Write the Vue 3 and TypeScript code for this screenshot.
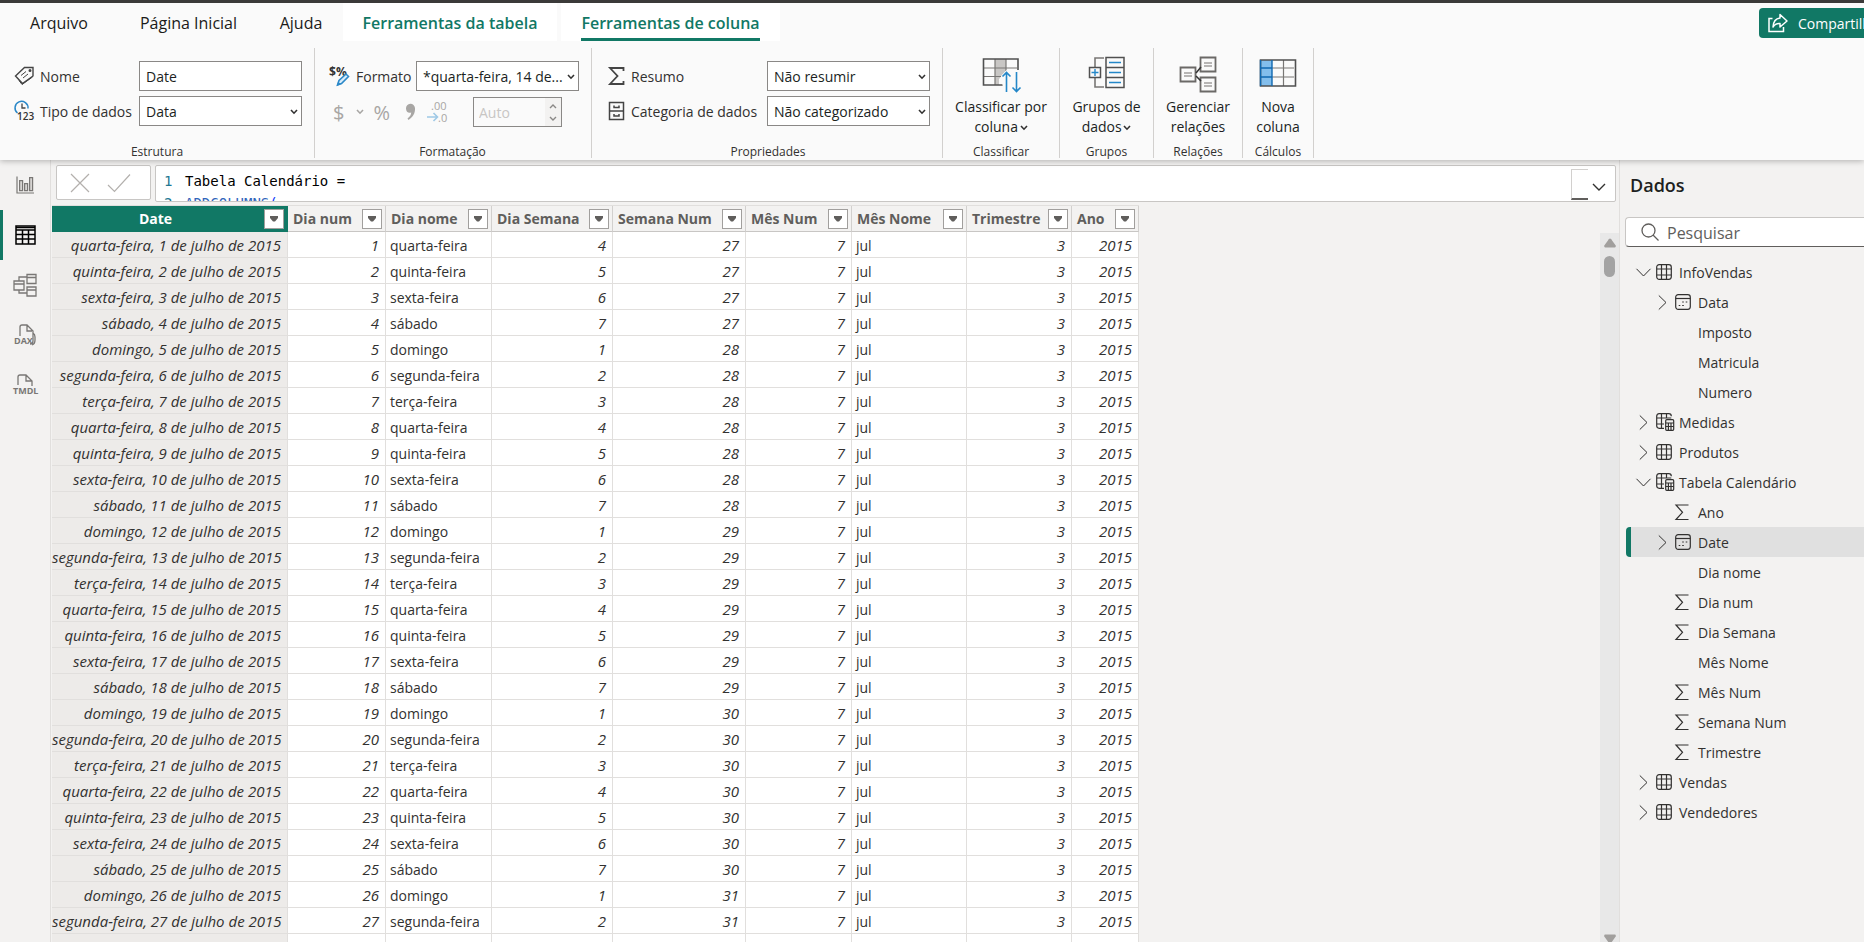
<script setup lang="ts">
import { ref } from 'vue'

type Column = { label: string; width: number; align: 'right' | 'left' }
type Row = (string | number)[]
type TreeIcon = 'table' | 'calc' | 'date' | 'sum' | 'none'
type TreeNode = { label: string; icon: TreeIcon; level: 1 | 2; state?: 'open' | 'closed'; selected?: boolean }

const tabs = [
  { label: 'Arquivo', kind: 'file' },
  { label: 'Página Inicial', kind: 'home' },
  { label: 'Ajuda', kind: 'help' },
  { label: 'Ferramentas da tabela', kind: 'context' },
  { label: 'Ferramentas de coluna', kind: 'context active' },
]

const views = ['report', 'data', 'model', 'dax', 'tmdl']
const viewNames = ['Relatório', 'Tabela', 'Modelo', 'Consulta DAX', 'TMDL']

const columns: Column[] = [
  { label: 'Date', width: 236, align: 'right' },
  { label: 'Dia num', width: 98, align: 'right' },
  { label: 'Dia nome', width: 106, align: 'left' },
  { label: 'Dia Semana', width: 121, align: 'right' },
  { label: 'Semana Num', width: 133, align: 'right' },
  { label: 'Mês Num', width: 106, align: 'right' },
  { label: 'Mês Nome', width: 115, align: 'left' },
  { label: 'Trimestre', width: 105, align: 'right' },
  { label: 'Ano', width: 67, align: 'right' },
]

const weekdays = ['domingo', 'segunda-feira', 'terça-feira', 'quarta-feira', 'quinta-feira', 'sexta-feira', 'sábado']

// 1 July 2015 is a Wednesday; weeks start on Sunday.
const rows: Row[] = Array.from({ length: 28 }, (_, i) => {
  const day = i + 1
  const weekday = (i + 3) % 7
  const week = 27 + Math.floor((i + 3) / 7)
  return [`${weekdays[weekday]}, ${day} de julho de 2015`, day, weekdays[weekday], weekday + 1, week, 7, 'jul', 3, 2015]
})

const tree: TreeNode[] = [
  { label: 'InfoVendas', icon: 'table', level: 1, state: 'open' },
  { label: 'Data', icon: 'date', level: 2, state: 'closed' },
  { label: 'Imposto', icon: 'none', level: 2 },
  { label: 'Matricula', icon: 'none', level: 2 },
  { label: 'Numero', icon: 'none', level: 2 },
  { label: 'Medidas', icon: 'calc', level: 1, state: 'closed' },
  { label: 'Produtos', icon: 'table', level: 1, state: 'closed' },
  { label: 'Tabela Calendário', icon: 'calc', level: 1, state: 'open' },
  { label: 'Ano', icon: 'sum', level: 2 },
  { label: 'Date', icon: 'date', level: 2, state: 'closed', selected: true },
  { label: 'Dia nome', icon: 'none', level: 2 },
  { label: 'Dia num', icon: 'sum', level: 2 },
  { label: 'Dia Semana', icon: 'sum', level: 2 },
  { label: 'Mês Nome', icon: 'none', level: 2 },
  { label: 'Mês Num', icon: 'sum', level: 2 },
  { label: 'Semana Num', icon: 'sum', level: 2 },
  { label: 'Trimestre', icon: 'sum', level: 2 },
  { label: 'Vendas', icon: 'table', level: 1, state: 'closed' },
  { label: 'Vendedores', icon: 'table', level: 1, state: 'closed' },
]

const columnName = ref('Date')
const search = ref('')
</script>

<template>
  <div class="shell">
    <header class="top">
      <div class="tabbar">
        <nav class="tabs">
          <button v-for="t in tabs" :key="t.label" class="tab" :class="t.kind" type="button"><span>{{ t.label }}</span></button>
        </nav>
        <div class="share-slot">
          <button class="share" type="button">
            <svg width="20" height="20" viewBox="0 0 20 20" fill="none" stroke="#fff" stroke-width="1.5">
              <path d="M4.500 5.500H1V18.500H15.500V14" />
              <path d="M12 1.500l7 6.500l-7 6v-3.500c-3.500-.3-5.500 1-7 3.500c.3-5 3-8.500 7-9z" stroke-linejoin="round" />
            </svg>
            <span>Compartilhar</span>
          </button>
        </div>
      </div>

      <div class="ribbon">
        <section class="group structure">
          <div class="fields">
            <label for="f-name">
              <svg width="20" height="20" viewBox="0 0 20 20" fill="none" stroke="#444" stroke-width="1.4">
                <path d="M10.500 1.500H19V10L8.500 17.500L1.500 10z" />
                <path d="M5 14.500l3 4L18.500 11" stroke-width="1" />
                <path d="M7 9.500l5-4M9 12l5-4" stroke-width="1" /><circle cx="16" cy="4.500" r=".8" />
              </svg>Nome
            </label>
            <input id="f-name" v-model="columnName" class="box" type="text" />
            <label for="f-type">
              <svg width="20" height="24" viewBox="0 0 20 24" fill="none">
                <path d="M3.500 14A6.500 6.500 0 1 1 14 9.500" stroke="#2b88c8" stroke-width="1.500" />
                <path d="M8 4.500V9h3.500" stroke="#444" stroke-width="1.300" />
                <text x="3" y="21" font-size="10" font-weight="600" fill="#333">123</text>
              </svg>Tipo de dados
            </label>
            <span class="select">
              <select id="f-type" class="box"><option>Data</option></select>
              <svg class="chev" width="8" height="6" viewBox="0 0 8 6"><path d="M1 1l3 3.200L7 1" /></svg>
            </span>
          </div>
          <h2>Estrutura</h2>
        </section>

        <section class="group format">
          <div class="format-row">
            <label for="f-format">
              <svg width="22" height="22" viewBox="0 0 22 22">
                <text x="1" y="11" font-size="12" font-weight="700" fill="#333">$</text>
                <text x="8" y="11" font-size="12" font-weight="700" fill="#333">%</text>
                <path d="M9.500 20l1.500-4.500L18 9l2.500 2.500L13.500 18.500z" fill="#d9ecfa" stroke="#2b88c8" stroke-width="1.600" />
                <path d="M9 21l1-4 3 2z" fill="#2b88c8" />
              </svg>Formato
            </label>
            <span class="select">
              <select id="f-format" class="box"><option>*quarta-feira, 14 de...</option></select>
              <svg class="chev" width="8" height="6" viewBox="0 0 8 6"><path d="M1 1l3 3.200L7 1" /></svg>
            </span>
          </div>
          <div class="format-tools">
            <button class="tool money" type="button" disabled aria-label="Moeda">
              <span>$</span>
              <svg width="8" height="6" viewBox="0 0 8 6" fill="none" stroke="#a8a6a4" stroke-width="1.600"><path d="M1 1l3 3.200L7 1" /></svg>
            </button>
            <button class="tool percent" type="button" disabled>%</button>
            <button class="tool" type="button" disabled aria-label="Milhares">
              <svg width="11" height="18" viewBox="0 0 11 18" fill="#a8a6a4"><path d="M1 5.500a4.500 4.500 0 0 1 9-.5c.4 5-2 9-6.500 12l-1-1.500c2.500-2 3.500-3.500 3.700-6C3.500 10.500 1 9 1 5.500z" /></svg>
            </button>
            <button class="tool" type="button" disabled aria-label="Casas decimais">
              <svg width="21" height="24" viewBox="0 0 21 24">
                <text x="4" y="10" font-size="11" fill="#a8a6a4">.00</text>
                <text x="11" y="22" font-size="11" fill="#a8a6a4">.0</text>
                <path d="M0 17h10M6.500 13l4 4-4 4" fill="none" stroke="#9fc9e6" stroke-width="1.600" />
              </svg>
            </button>
            <span class="spinner">
              <input type="text" value="Auto" disabled aria-label="Casas decimais" />
              <span class="steps">
                <svg width="8" height="5" viewBox="0 0 8 5"><path d="M1 4l3-3 3 3" /></svg>
                <svg width="8" height="5" viewBox="0 0 8 5"><path d="M1 1l3 3 3-3" /></svg>
              </span>
            </span>
          </div>
          <h2>Formatação</h2>
        </section>

        <section class="group props">
          <div class="fields">
            <label for="f-sum">
              <svg width="17" height="20" viewBox="0 0 17 20" fill="none" stroke="#444" stroke-width="1.800">
                <path d="M15.500 5V2H2l7.500 8L2 18h13.500v-3" />
              </svg>Resumo
            </label>
            <span class="select">
              <select id="f-sum" class="box"><option>Não resumir</option></select>
              <svg class="chev" width="8" height="6" viewBox="0 0 8 6"><path d="M1 1l3 3.200L7 1" /></svg>
            </span>
            <label for="f-cat">
              <svg width="17" height="20" viewBox="0 0 17 20" fill="none" stroke="#444" stroke-width="1.500">
                <path d="M1.500 1.500h14v17h-14zM1.500 10h14M6 4.500v2h5v-2M6 13v2h5v-2" />
              </svg>Categoria de dados
            </label>
            <span class="select">
              <select id="f-cat" class="box"><option>Não categorizado</option></select>
              <svg class="chev" width="8" height="6" viewBox="0 0 8 6"><path d="M1 1l3 3.200L7 1" /></svg>
            </span>
          </div>
          <h2>Propriedades</h2>
        </section>

        <section class="group g-sort">
          <button class="big" type="button">
            <svg width="40" height="38" viewBox="0 0 40 38" fill="none">
              <path d="M14 3h11v12l-7 8v6h-4z" fill="#c8c6c4" />
              <path d="M3 12h33M3 20.500h17M14 3v26M25 3v12" stroke="#797775" stroke-width="1.200" />
              <path d="M37 14V3H2.500v26H22" stroke="#505050" stroke-width="1.600" />
              <path d="M20 20l5.500-6L31 20V32H22z" fill="#fafafa" />
              <path d="M25.500 36V17M21.500 20.500l4-4 4 4M35.500 16v19M31.500 31.500l4 4 4-4" stroke="#2487c8" stroke-width="1.600" />
            </svg>
            <span>Classificar por<br />coluna <svg width="8" height="6" viewBox="0 0 8 6" class="mini"><path d="M1 1l3 3.200L7 1" /></svg></span>
          </button>
          <h2>Classificar</h2>
        </section>

        <section class="group g-groups">
          <button class="big" type="button">
            <svg width="40" height="38" viewBox="0 0 40 38" fill="none">
              <path d="M17 2H8v9M17 31H8v-9" stroke="#797775" stroke-width="1.600" />
              <path d="M2.500 11.500h11v10h-11zM19 1.500h18v30H19zM19 11.500h18M19 21.500h18" stroke="#505050" stroke-width="1.500" />
              <path d="M8 13v7M4.500 16.500h7M22 6.500h12M22 16.500h12M22 26.500h12" stroke="#2487c8" stroke-width="1.400" />
            </svg>
            <span>Grupos de<br />dados <svg width="8" height="6" viewBox="0 0 8 6" class="mini"><path d="M1 1l3 3.200L7 1" /></svg></span>
          </button>
          <h2>Grupos</h2>
        </section>

        <section class="group g-rel">
          <button class="big" type="button">
            <svg width="40" height="38" viewBox="0 0 40 38" fill="none">
              <path d="M2.500 11.500h15v14h-15zM22.500 1.500h15v14h-15zM22.500 21.500h15v14h-15z" stroke="#6b6967" stroke-width="1.800" />
              <path d="M18 17l5-6M18 20l5 5" stroke="#333" stroke-width="1.500" />
              <path d="M6 17h8M6 20h8M26 7h8M26 10h8M26 27h8M26 30h8" stroke="#a19f9d" stroke-width="1.300" />
            </svg>
            <span>Gerenciar<br />relações</span>
          </button>
          <h2>Relações</h2>
        </section>

        <section class="group g-calc">
          <button class="big" type="button">
            <svg width="40" height="38" viewBox="0 0 40 38" fill="none">
              <path d="M3 4h11v26H3z" fill="#83beec" />
              <path d="M14 12h22M14 21h22M25.500 4v26" stroke="#797775" stroke-width="1.200" />
              <path d="M2.500 4h35v26h-35z" stroke="#505050" stroke-width="1.600" />
              <path d="M14 30V4M3 12h11M3 21h11M2.500 4v26" stroke="#1068b0" stroke-width="1.400" />
            </svg>
            <span>Nova<br />coluna</span>
          </button>
          <h2>Cálculos</h2>
        </section>
      </div>
    </header>

    <div class="body">
      <nav class="views">
        <button v-for="(v, i) in views" :key="v" type="button" :class="{ on: v === 'data' }" :aria-label="viewNames[i]">
          <svg v-if="v === 'report'" width="18" height="18" viewBox="0 0 18 18" fill="#d6d4d2" stroke="#797775" stroke-width="1.200">
            <path d="M1 .5V17h17" fill="none" /><path d="M3.600 4.600h3v10h-3zM8.600 7.600h3v7h-3zM13.600 1.600h3v13h-3z" />
          </svg>
          <svg v-else-if="v === 'data'" width="21" height="20" viewBox="0 0 21 20" fill="none" stroke="#000" stroke-width="1.500">
            <path d="M1 1h19v18H1zM1 5h19M1 9.500h19M1 14h19M7.500 5v14M13.500 5v14" /><path d="M1 2.500h19" />
          </svg>
          <svg v-else-if="v === 'model'" width="24" height="24" viewBox="0 0 24 24" fill="none" stroke="#797775" stroke-width="1.300">
            <path d="M1 8h10v9H1zM1 11h10M14 1.500h9v9h-9zM14 4.500h9M14 14h9v9h-9zM14 17h9M6 8V4h8M6 17v3h8" />
          </svg>
          <svg v-else-if="v === 'dax'" width="24" height="24" viewBox="0 0 24 24" fill="none" stroke="#797775" stroke-width="1.300">
            <path d="M7 13V4q0-2 2-2h5l6 6v10q0 3-3 3M14 2v6h5M20 10q2 1 2 4v3q0 4-3 5" />
            <text x="1" y="21" font-size="9" font-weight="700" fill="#797775" stroke="none">DAX</text>
          </svg>
          <svg v-else width="26" height="24" viewBox="0 0 26 24" fill="none" stroke="#797775" stroke-width="1.300">
            <path d="M6 12V4q0-2 2-2h6l6 6v5M14 2v6h6" />
            <text x="1" y="21" font-size="9" font-weight="700" fill="#797775" stroke="none">TMDL</text>
          </svg>
        </button>
      </nav>

      <main class="work">
        <div class="formula">
          <div class="commit">
            <button type="button" aria-label="Cancelar"><svg width="20" height="20" viewBox="0 0 20 20"><path d="M1 1l18 18M19 1L1 19" /></svg></button>
            <button type="button" aria-label="Confirmar"><svg width="24" height="20" viewBox="0 0 24 20"><path d="M1 12l6.500 6.500L23 1.500" /></svg></button>
          </div>
          <div class="editor">
            <pre><span class="ln">1</span>Tabela Calendário =
<span class="ln">2</span><span class="fn">ADDCOLUMNS</span><span class="paren">(</span></pre>
            <span class="minimap"></span>
            <button class="expand" type="button" aria-label="Expandir">
              <svg width="14" height="9" viewBox="0 0 14 9"><path d="M1 1l6 6 6-6" /></svg>
            </button>
          </div>
        </div>

        <div class="data">
          <div class="grid">
            <table>
              <colgroup><col v-for="c in columns" :key="c.label" :style="{ width: c.width + 'px' }" /></colgroup>
              <thead>
                <tr>
                  <th v-for="(c, i) in columns" :key="c.label" scope="col" :class="{ picked: i === 0 }">
                    <div>
                      <span>{{ c.label }}</span>
                      <button type="button" :aria-label="'Filtrar ' + c.label"><svg width="8" height="6" viewBox="0 0 8 6"><path d="M0 0h8v2L5 5.500H3L0 2z" /></svg></button>
                    </div>
                  </th>
                </tr>
              </thead>
              <tbody>
                <tr v-for="(r, ri) in rows" :key="ri">
                  <td v-for="(cell, ci) in r" :key="ci" :class="[columns[ci].align, { picked: ci === 0 }]">{{ cell }}</td>
                </tr>
              </tbody>
            </table>
          </div>
          <div class="scroll">
            <svg width="12" height="10" viewBox="0 0 12 10"><path d="M4.800 1.200q1.200-1.500 2.400 0L11.700 7.500q.5 2-1 2H1.300q-1.500 0-1-2z" /></svg>
            <span class="thumb"></span>
            <svg class="down" width="12" height="10" viewBox="0 0 12 10"><path d="M4.800 8.800q1.200 1.500 2.400 0L11.700 2.500q.5-2-1-2H1.300q-1.500 0-1 2z" /></svg>
          </div>
        </div>
      </main>

      <aside class="pane">
        <h1>Dados</h1>
        <label class="search">
          <svg width="18" height="18" viewBox="0 0 18 18" fill="none" stroke="#605e5c" stroke-width="1.300"><circle cx="7.500" cy="7.500" r="6.500" /><path d="M12 12l5.500 5.500" /></svg>
          <input v-model="search" type="text" placeholder="Pesquisar" aria-label="Pesquisar" />
        </label>
        <ul class="tree">
          <li v-for="n in tree" :key="n.label" :class="['lvl' + n.level, { selected: n.selected }]">
            <span class="twist">
              <svg v-if="n.state === 'open'" width="15" height="9" viewBox="0 0 15 9"><path d="M.5.800L7.500 8l7-7.200" /></svg>
              <svg v-else-if="n.state === 'closed'" width="9" height="15" viewBox="0 0 9 15"><path d="M.800.500L8 7.500l-7.200 7" /></svg>
            </span>
            <span class="glyph">
              <svg v-if="n.icon === 'table'" width="16" height="16" viewBox="0 0 16 16"><rect x=".7" y=".7" width="14.600" height="14.600" rx="2.500" /><path d="M5.500.700v14.600M10.500.700v14.600M.700 5h14.600M.700 11h14.600" /></svg>
              <svg v-else-if="n.icon === 'calc'" width="19" height="18" viewBox="0 0 19 18"><path d="M8 15.300H3.200Q.700 15.300.700 12.800V3.200Q.700.700 3.200.700h9.600q2.500 0 2.500 2.500M5.500.700v14.600M10.500.700V5M.700 5h14.600M.700 11H8" /><rect x="9.700" y="6.700" width="8" height="10.600" rx="1" /><path d="M9.700 10h8M9.700 13.500h8M12.400 10v7M15 10v7" /></svg>
              <svg v-else-if="n.icon === 'date'" width="16" height="16" viewBox="0 0 16 16"><rect x=".7" y=".7" width="14.600" height="14.600" rx="2.500" /><path d="M.700 4.500h14.600" /><path d="M7.200 8h1.600M10.700 8h1.600M3.700 11.500h1.600M7.200 11.500h1.600" stroke-width="1.600" /></svg>
              <svg v-else-if="n.icon === 'sum'" width="14" height="17" viewBox="0 0 14 17"><path d="M13.500 1H1l6.500 7.300L1 15.500h12.500" /></svg>
            </span>
            <span>{{ n.label }}</span>
          </li>
        </ul>
      </aside>
    </div>
  </div>
</template>

<style>
body { margin: 0; overflow: hidden; }
</style>

<style scoped>
* { box-sizing: border-box; }
.shell { height: 100vh; display: flex; flex-direction: column; overflow: hidden; background: #f3f2f1; color: #323130; font-family: "Open Sans", "Noto Sans", sans-serif; font-size: 14px; }
button, input, select { font: inherit; color: inherit; margin: 0; }
button { background: none; border: 0; padding: 0; }
h1, h2 { margin: 0; }
svg { display: block; flex: none; overflow: visible; }

.top { flex: none; height: 160px; background: #fafafa; border-top: 3px solid #3b3a39; box-shadow: 0 1px 6px rgba(0, 0, 0, .28); position: relative; z-index: 2; }
.tabbar { display: flex; justify-content: space-between; height: 38px; }
.tabs { display: flex; }
.tab { height: 38px; font-size: 16px; color: #1b1a19; white-space: nowrap; display: flex; justify-content: center; }
.tab span { height: 38px; line-height: 40px; }
.tab.file { width: 118px; }
.tab.home { width: 141px; }
.tab.help { width: 84px; }
.tab.context { width: 214px; margin-right: 4px; background: #fff; color: #117865; font-weight: 600; }
.tab.context.active { width: 219px; }
.tab.active span { border-bottom: 3px solid #117865; }
.share-slot { flex: 0 0 105px; overflow: hidden; padding-top: 5px; }
.share { display: flex; align-items: center; gap: 10px; width: max-content; height: 30px; padding: 0 12px 0 9px; border-radius: 4px; background: #117865; color: #fff; }

.ribbon { display: flex; padding-top: 7px; }
.group { height: 110px; border-right: 1px solid #d2d0ce; display: flex; flex-direction: column; flex: none; }
.group h2 { margin-top: auto; font-size: 12px; line-height: 12px; font-weight: 400; text-align: center; }
.structure { width: 315px; padding-left: 14px; }
.format { width: 277px; padding-left: 13px; }
.props { width: 351px; padding-left: 16px; }
.g-sort { width: 117px; }
.g-groups { width: 94px; }
.g-rel { width: 89px; }
.g-calc { width: 71px; }
.structure h2, .format h2, .props h2 { padding-right: 14px; }
.fields { display: grid; grid-template-columns: 125px 163px; row-gap: 5px; padding-top: 13px; align-items: center; }
.props .fields { grid-template-columns: 159px 163px; }
label { display: flex; align-items: center; gap: 6px; white-space: nowrap; }
.box { width: 163px; height: 30px; padding: 0 6px; border: 1px solid #8a8886; border-radius: 0; background: #fff; appearance: none; color: #201f1e; }
.select { position: relative; display: block; }
.chev { position: absolute; right: 4px; top: 13px; }
.chev path, .mini path { fill: none; stroke: #323130; stroke-width: 1.6; }
.format-row { display: flex; justify-content: space-between; padding: 13px 12px 0 0; }
.format-tools { display: flex; align-items: center; height: 30px; margin-top: 6px; padding-left: 5px; color: #a8a6a4; }
.tool { display: flex; align-items: center; color: #a8a6a4; margin-right: 11px; }
.tool.money { font-size: 20px; gap: 12px; margin-right: 9px; }
.tool.percent { font-size: 20px; margin-right: 15px; }
.spinner { display: flex; margin-left: 14px; width: 89px; height: 30px; border: 1px solid #8a8886; background: #fafafa; }
.spinner input { width: 71px; border: 0; background: none; padding: 0 5px; color: #c8c6c4; }
.steps { display: flex; flex-direction: column; justify-content: space-around; padding: 2px 4px; background: #f3f2f1; }
.steps path { fill: none; stroke: #8a8886; stroke-width: 1.4; }
.big { display: flex; flex-direction: column; align-items: center; padding-top: 8px; gap: 3px; line-height: 20px; color: #201f1e; white-space: nowrap; }
.mini { display: inline-block; vertical-align: 1px; margin-left: -2px; }

.body { flex: 1; min-height: 0; display: flex; }
.views { flex: 0 0 51px; display: flex; flex-direction: column; border-right: 1px solid #e1dfdd; }
.views button { height: 50px; display: flex; align-items: center; justify-content: center; border-left: 3px solid transparent; padding: 0 3px 1px 0; }
.views button.on { border-left-color: #117865; }
.work { flex: 1; min-width: 0; display: flex; flex-direction: column; }
.formula { display: flex; gap: 4px; height: 42px; padding: 5px 3px 0 5px; }
.commit { width: 95px; height: 35px; display: flex; align-items: center; gap: 17px; padding-left: 13px; background: #fff; border: 1px solid #c8c6c4; border-radius: 2px; }
.commit path { fill: none; stroke: #b3b0ad; stroke-width: 1.2; }
.editor { flex: 1; height: 37px; display: flex; overflow: hidden; background: #fff; border: 1px solid #c8c6c4; border-radius: 2px; }
pre { flex: 1; margin: 0; padding: 4px 0 0 8px; font: 14px/22px "DejaVu Sans Mono", monospace; color: #000; }
.ln { display: inline-block; width: 21px; color: #237893; }
.fn { color: #3165bb; }
.paren { color: #0431fa; }
.minimap { width: 17px; height: 31px; margin-top: 3px; border: 1px solid #d2d0ce; border-right: 0; border-bottom: 2px solid #605e5c; }
.expand { width: 27px; display: flex; justify-content: center; align-items: center; padding: 8px 5px 0 0; }
.expand path { fill: none; stroke: #323130; stroke-width: 1.4; }

.data { flex: 1; min-height: 0; display: flex; }
.grid { flex: 1; overflow: hidden; padding: 3px 0 0 1px; }
table { table-layout: fixed; width: 1087px; border-spacing: 0; border-top: 1px solid #e1dfdd; }
th { height: 26px; padding: 0; background: #f3f2f1; color: #605e5c; font-size: 14px; font-weight: 700; border-right: 1px solid #d2d0ce; border-bottom: 1px solid #c8c6c4; }
th div { display: flex; align-items: center; justify-content: space-between; height: 25px; padding: 0 3px 0 5px; white-space: nowrap; }
th button { flex: none; width: 20px; height: 20px; display: flex; align-items: center; justify-content: center; border: 1px solid #a19f9d; background: #fff; }
th path { fill: #605e5c; }
th.picked { background: #117865; color: #fff; border-color: #117865; }
th.picked div { padding-left: 0; }
th.picked span { flex: 1; padding-right: 5px; text-align: center; }
td { height: 26px; padding: 2px 6px 0 4px; line-height: 23px; background: #fff; border-right: 1px solid #e1dfdd; border-bottom: 1px solid #e1dfdd; white-space: nowrap; }
td.right { text-align: right; font-size: 15px; font-style: italic; padding-left: 0; }
td.picked { background: #edebe9; }
.scroll { flex: 0 0 19px; margin-top: 31px; padding-top: 5px; background: #e8e8e8; display: flex; flex-direction: column; align-items: center; }
.scroll path { fill: #a19f9d; }
.thumb { width: 11px; height: 21px; margin-top: 8px; border-radius: 6px; background: #a3a3a3; }
.down { margin-top: auto; margin-bottom: -2px; }

.pane { flex: 0 0 245px; border-left: 1px solid #e1dfdd; padding-left: 5px; overflow: hidden; }
h1 { padding: 11px 0 0 5px; height: 57px; line-height: 28px; font-size: 18px; font-weight: 600; color: #201f1e; }
.search { height: 30px; padding-left: 15px; gap: 8px; background: #fff; border: 1px solid #c8c6c4; border-right: 0; border-bottom-color: #605e5c; border-radius: 4px 0 0 4px; }
.search input { flex: 1; min-width: 0; border: 0; outline: 0; padding: 2px 0 0; background: none; font-size: 16px; }
.search input::placeholder { color: #605e5c; opacity: 1; }
.tree { list-style: none; margin: 10px 0 0 1px; padding: 0; }
.tree li { height: 30px; display: flex; align-items: center; border-left: 5px solid transparent; border-radius: 4px 0 0 4px; }
.tree li.lvl2 { padding-left: 19px; }
.tree li.selected { background: #e0e0e0; border-left-color: #117865; }
.twist { flex: 0 0 25px; display: flex; justify-content: center; }
.glyph { flex: 0 0 23px; }
.tree path, .tree rect { fill: none; stroke: #323130; stroke-width: 1.2; }
.twist path { stroke-width: 1; }
</style>
